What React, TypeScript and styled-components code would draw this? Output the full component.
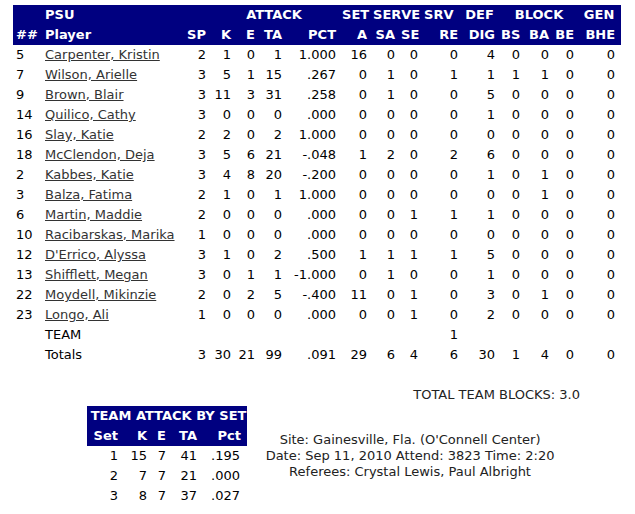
import React from 'react';
import styled, { createGlobalStyle } from 'styled-components';

const GlobalStyle = createGlobalStyle`
  body {
    margin: 0;
    background: #fff;
    font-family: 'DejaVu Sans', Verdana, sans-serif;
    font-size: 13px;
    color: #000;
  }
`;

interface PlayerLine {
  num: string;
  name: string;
  stats: string[];
}

const players: PlayerLine[] = [
  { num: '5', name: 'Carpenter, Kristin', stats: ['2', '1', '0', '1', '1.000', '16', '0', '0', '0', '4', '0', '0', '0', '0'] },
  { num: '7', name: 'Wilson, Arielle', stats: ['3', '5', '1', '15', '.267', '0', '1', '0', '1', '1', '1', '1', '0', '0'] },
  { num: '9', name: 'Brown, Blair', stats: ['3', '11', '3', '31', '.258', '0', '1', '0', '0', '5', '0', '0', '0', '0'] },
  { num: '14', name: 'Quilico, Cathy', stats: ['3', '0', '0', '0', '.000', '0', '0', '0', '0', '1', '0', '0', '0', '0'] },
  { num: '16', name: 'Slay, Katie', stats: ['2', '2', '0', '2', '1.000', '0', '0', '0', '0', '0', '0', '0', '0', '0'] },
  { num: '18', name: 'McClendon, Deja', stats: ['3', '5', '6', '21', '-.048', '1', '2', '0', '2', '6', '0', '0', '0', '0'] },
  { num: '2', name: 'Kabbes, Katie', stats: ['3', '4', '8', '20', '-.200', '0', '0', '0', '0', '1', '0', '1', '0', '0'] },
  { num: '3', name: 'Balza, Fatima', stats: ['2', '1', '0', '1', '1.000', '0', '0', '0', '0', '0', '0', '1', '0', '0'] },
  { num: '6', name: 'Martin, Maddie', stats: ['2', '0', '0', '0', '.000', '0', '0', '1', '1', '1', '0', '0', '0', '0'] },
  { num: '10', name: 'Racibarskas, Marika', stats: ['1', '0', '0', '0', '.000', '0', '0', '0', '0', '0', '0', '0', '0', '0'] },
  { num: '12', name: "D'Errico, Alyssa", stats: ['3', '1', '0', '2', '.500', '1', '1', '1', '1', '5', '0', '0', '0', '0'] },
  { num: '13', name: 'Shifflett, Megan', stats: ['3', '0', '1', '1', '-1.000', '0', '1', '0', '0', '1', '0', '0', '0', '0'] },
  { num: '22', name: 'Moydell, Mikinzie', stats: ['2', '0', '2', '5', '-.400', '11', '0', '1', '0', '3', '0', '1', '0', '0'] },
  { num: '23', name: 'Longo, Ali', stats: ['1', '0', '0', '0', '.000', '0', '0', '1', '0', '2', '0', '0', '0', '0'] },
];

const teamRow = ['', '', '', '', '', '', '', '', '1', '', '', '', '', ''];
const totalsRow = ['3', '30', '21', '99', '.091', '29', '6', '4', '6', '30', '1', '4', '0', '0'];

const statHeads = ['SP', 'K', 'E', 'TA', 'PCT', 'A', 'SA', 'SE', 'RE', 'DIG', 'BS', 'BA', 'BE', 'BHE'];
const colWidths = [29, 138, 29, 25, 24, 27, 54, 31, 28, 23, 40, 37, 25, 29, 25, 44];

const bySet = [
  ['1', '15', '7', '41', '.195'],
  ['2', '7', '7', '21', '.000'],
  ['3', '8', '7', '37', '.027'],
];
const setWidths = [34, 29, 19, 31, 47];

const App: React.FC = () => {
  return (
    <Page>
      <GlobalStyle />
      <BoxTable>
        <colgroup>
          {colWidths.map((w, i) => (
            <col key={i} style={{ width: w }} />
          ))}
        </colgroup>
        <thead>
          <HeadRow>
            <Th align="left"></Th>
            <Th align="left">PSU</Th>
            <Th></Th>
            <Th colSpan={4} align="center">ATTACK</Th>
            <Th align="center">SET</Th>
            <Th colSpan={2} align="center">SERVE</Th>
            <Th $padRight={15}>SRV</Th>
            <Th align="center">DEF</Th>
            <Th colSpan={3} align="center" $padRight={0}>BLOCK</Th>
            <Th align="center">GEN</Th>
          </HeadRow>
          <HeadRow>
            <Th align="left">##</Th>
            <Th align="left">Player</Th>
            {statHeads.map((h, i) => (
              <Th key={h} $padRight={i === statHeads.length - 1 ? 6 : 3}>{h}</Th>
            ))}
          </HeadRow>
        </thead>
        <tbody>
          {players.map(p => (
            <Row key={p.num}>
              <Td align="left">{p.num}</Td>
              <Td align="left"><PlayerLink href="#">{p.name}</PlayerLink></Td>
              {p.stats.map((s, i) => (
                <Td key={i} $padRight={i === p.stats.length - 1 ? 6 : 3}>{s}</Td>
              ))}
            </Row>
          ))}
          <Row>
            <Td align="left"></Td>
            <Td align="left">TEAM</Td>
            {teamRow.map((s, i) => (
              <Td key={i} $padRight={i === teamRow.length - 1 ? 6 : 3}>{s}</Td>
            ))}
          </Row>
          <Row>
            <Td align="left"></Td>
            <Td align="left">Totals</Td>
            {totalsRow.map((s, i) => (
              <Td key={i} $padRight={i === totalsRow.length - 1 ? 6 : 3}>{s}</Td>
            ))}
          </Row>
        </tbody>
      </BoxTable>

      <TeamBlocks>TOTAL TEAM BLOCKS: 3.0</TeamBlocks>

      <Bottom>
        <SetTable>
          <colgroup>
            {setWidths.map((w, i) => (
              <col key={i} style={{ width: w }} />
            ))}
          </colgroup>
          <thead>
            <HeadRow>
              <Th colSpan={5} align="center" $padRight={0}>TEAM ATTACK BY SET</Th>
            </HeadRow>
            <HeadRow>
              <Th>Set</Th>
              <Th>K</Th>
              <Th>E</Th>
              <Th>TA</Th>
              <Th $padRight={6}>Pct</Th>
            </HeadRow>
          </thead>
          <tbody>
            {bySet.map(r => (
              <Row key={r[0]}>
                {r.map((s, i) => (
                  <Td key={i} $padRight={i === 4 ? 7 : 3}>{s}</Td>
                ))}
              </Row>
            ))}
          </tbody>
        </SetTable>

        <GameInfo>
          <div>Site: Gainesville, Fla. (O'Connell Center)</div>
          <div>Date: Sep 11, 2010 Attend: 3823 Time: 2:20</div>
          <div>Referees: Crystal Lewis, Paul Albright</div>
        </GameInfo>
      </Bottom>
    </Page>
  );
};

const Page = styled.div`
  padding: 5px 0 0 13px;
  width: 608px;
`;

const BoxTable = styled.table`
  width: 608px;
  table-layout: fixed;
  border-collapse: collapse;
  border-spacing: 0;
`;

const HeadRow = styled.tr`
  background-color: #000080;
  height: 20px;
`;

const Th = styled.th<{ align?: string; $padRight?: number }>`
  padding: 0 ${p => (p.$padRight ?? 3)}px 0 3px;
  text-align: ${p => p.align || 'right'};
  color: #fff;
  font-weight: bold;
  font-size: 13px;
  line-height: 20px;
  white-space: nowrap;
`;

const Row = styled.tr`
  height: 20px;
`;

const Td = styled.td<{ align?: string; $padRight?: number }>`
  padding: 0 ${p => (p.$padRight ?? 3)}px 0 3px;
  text-align: ${p => p.align || 'right'};
  line-height: 20px;
  white-space: nowrap;
  color: #000;
`;

const PlayerLink = styled.a`
  color: #333;
  text-decoration: underline;
`;

const TeamBlocks = styled.div`
  margin-top: 20px;
  padding-right: 41px;
  text-align: right;
  line-height: 20px;
  color: #222;
`;

const Bottom = styled.div`
  display: flex;
  align-items: center;
  margin-top: 1px;
  padding-left: 74px;
  gap: 8px;
`;

const SetTable = styled.table`
  width: 160px;
  table-layout: fixed;
  border-collapse: collapse;
  border-spacing: 0;
`;

const GameInfo = styled.div`
  width: 310px;
  text-align: center;
  line-height: 16px;
  color: #222;
`;

export default App;
